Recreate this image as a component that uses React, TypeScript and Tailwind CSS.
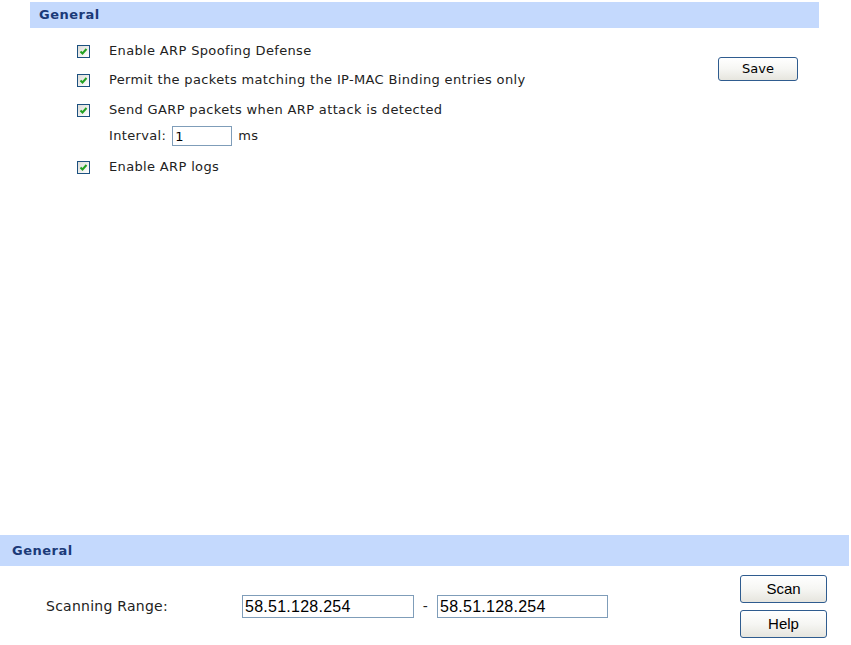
import React from "react";

const vfont = { fontFamily: '"DejaVu Sans", Verdana, sans-serif' };
const afont = { fontFamily: '"Liberation Sans", Arial, sans-serif' };

function Check() {
  return (
    <span className="inline-flex h-[13px] w-[13px] shrink-0 items-center justify-center border border-[#1c5180] bg-gradient-to-br from-[#dcdcd7] to-white">
      <svg width="9" height="9" viewBox="0 0 9 9">
        <polyline points="1.5,4.5 3.5,6.5 7.5,2" fill="none" stroke="#21a121" strokeWidth="2" />
      </svg>
    </span>
  );
}

function Btn({ label, cls }: { label: string; cls: string }) {
  return (
    <button
      className={`flex items-center justify-center rounded-[3px] border border-[#2f5c8f] bg-gradient-to-b from-white via-[#f6f6f3] to-[#e6e5de] text-black ${cls}`}
    >
      {label}
    </button>
  );
}

function Row({ children, h }: { children: React.ReactNode; h: string }) {
  return <div className={`flex items-center ${h}`}>{children}</div>;
}

export default function App() {
  return (
    <div className="relative h-[645px] w-[851px] overflow-hidden bg-white pt-[2px] text-[#222]" style={vfont}>
      {/* Top section */}
      <div className="ml-[30px] w-[789px]">
        <div className="flex h-[26px] items-center bg-[#c4d9fd] pl-[9px] text-[13px] font-bold tracking-[0.5px] text-[#1b3a78]">
          General
        </div>
        <div className="flex h-[507px] items-start">
          <div className="flex w-[688px] flex-col pt-[9px] text-[13px] tracking-[0.35px]">
            <Row h="h-[28px]">
              <span className="ml-[47px] mr-[19px] flex"><Check /></span>
              Enable ARP Spoofing Defense
            </Row>
            <Row h="h-[30px]">
              <span className="ml-[47px] mr-[19px] flex"><Check /></span>
              Permit the packets matching the IP-MAC Binding entries only
            </Row>
            <Row h="h-[30px]">
              <span className="ml-[47px] mr-[19px] flex"><Check /></span>
              Send GARP packets when ARP attack is detected
            </Row>
            <Row h="h-[22px]">
              <span className="ml-[79px]">Interval:</span>
              <input
                readOnly
                value="1"
                className="ml-[6px] h-[20px] w-[60px] border border-[#7f9db9] px-[2px] text-[13px] text-black outline-none"
                style={vfont}
              />
              <span className="ml-[6px]">ms</span>
            </Row>
            <Row h="h-[40px]">
              <span className="ml-[47px] mr-[19px] flex"><Check /></span>
              Enable ARP logs
            </Row>
          </div>
          <div className="pt-[29px]">
            <Btn label="Save" cls="h-[24px] w-[80px] text-[13px]" />
          </div>
        </div>
      </div>

      {/* Bottom section */}
      <div className="flex h-[31px] w-[849px] items-center bg-[#c4d9fd] pl-[12px] text-[13px] font-bold tracking-[0.5px] text-[#1b3a78]">
        General
      </div>
      <div className="flex w-[849px] items-start">
        <div className="flex items-center pt-[29px] text-[14px] tracking-[0.25px]">
          <span className="w-[242px] pl-[46px]">Scanning Range:</span>
          <input
            readOnly
            value="58.51.128.254"
            className="h-[23px] w-[172px] border border-[#7f9db9] px-[2px] text-[16px] text-black outline-none"
            style={afont}
          />
          <span className="flex w-[23px] justify-center">-</span>
          <input
            readOnly
            value="58.51.128.254"
            className="h-[23px] w-[171px] border border-[#7f9db9] px-[2px] text-[16px] text-black outline-none"
            style={afont}
          />
        </div>
        <div className="ml-[132px] flex flex-col gap-[7px] pt-[9px] text-[15px]" style={afont}>
          <Btn label="Scan" cls="h-[28px] w-[87px]" />
          <Btn label="Help" cls="h-[28px] w-[87px]" />
        </div>
      </div>
    </div>
  );
}
